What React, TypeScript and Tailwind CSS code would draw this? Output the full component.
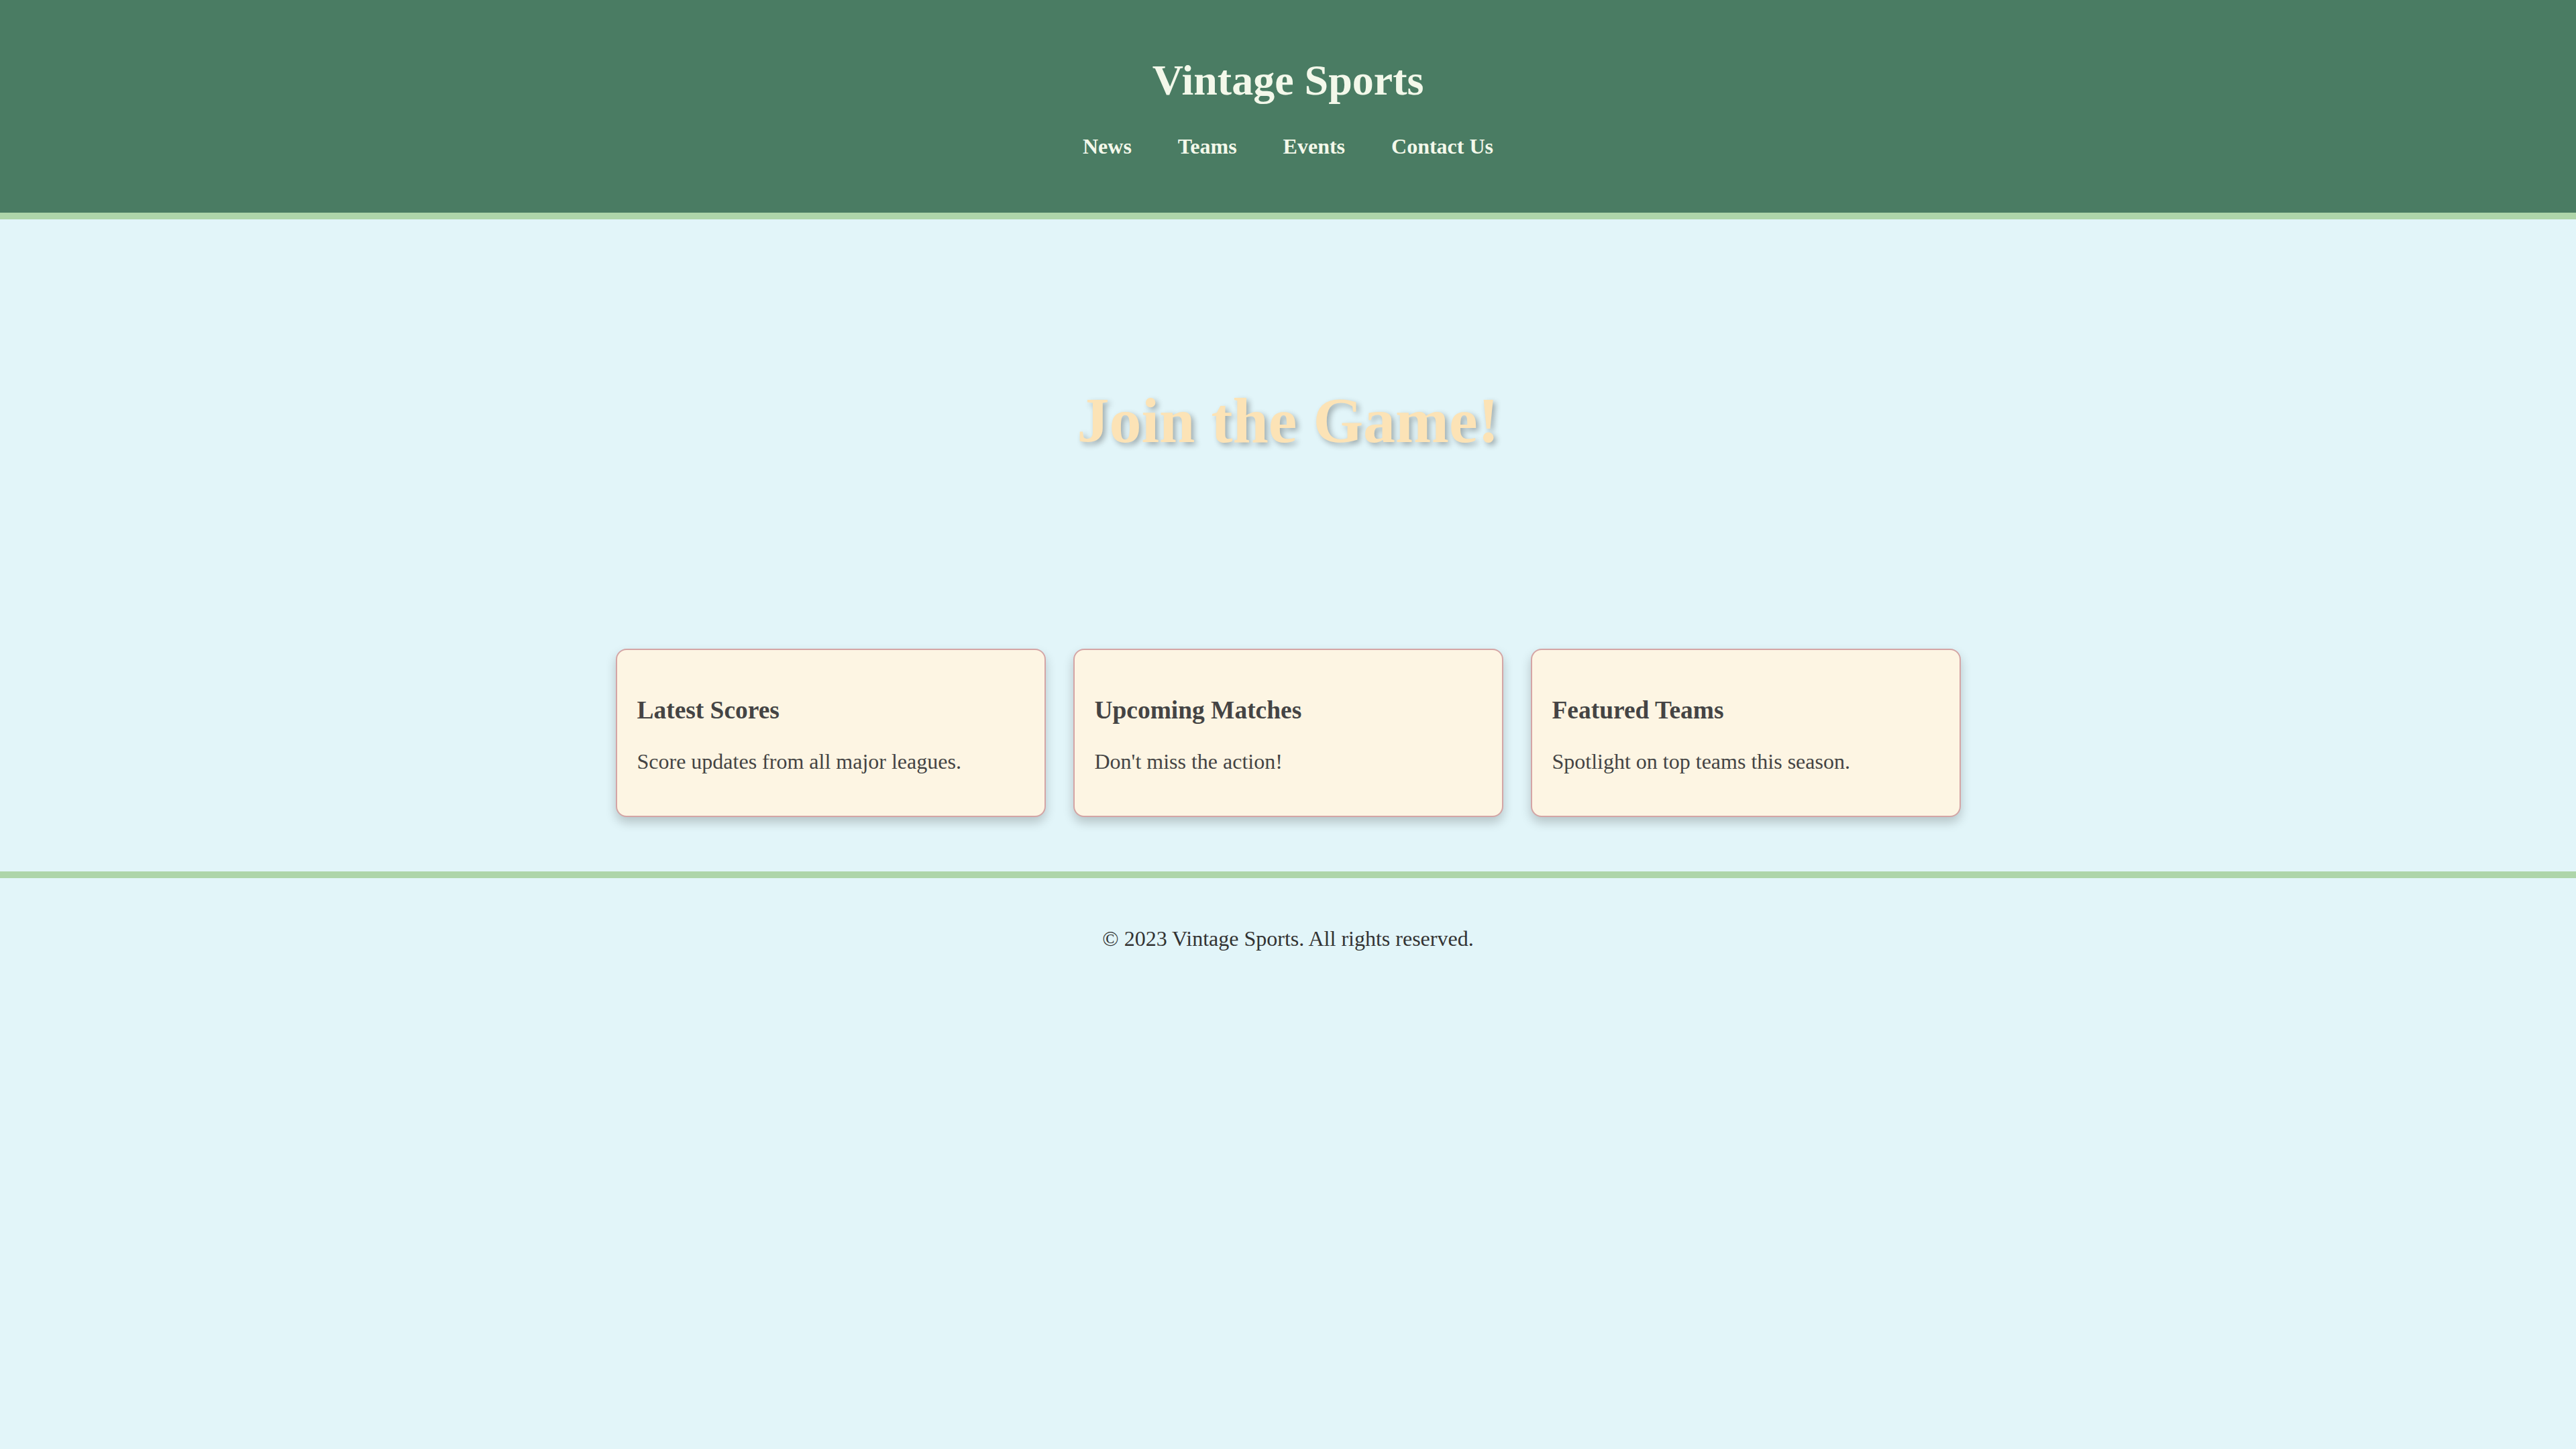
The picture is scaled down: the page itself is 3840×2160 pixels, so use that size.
const navItems = ["News", "Teams", "Events", "Contact Us"];

const cards = [
  { title: "Latest Scores", text: "Score updates from all major leagues." },
  { title: "Upcoming Matches", text: "Don't miss the action!" },
  { title: "Featured Teams", text: "Spotlight on top teams this season." },
];

export default function App() {
  return (
    <div className="min-h-screen bg-[#e2f5f9] font-['Liberation_Serif','Times_New_Roman',serif] text-[#333]">
      <header className="bg-[#4a7c63] border-b-[10px] border-[#aed5aa] pt-[40px] pb-[81px] text-center text-[#f3f8ea]">
        <h1 className="mt-[43px] mb-[43px] text-[64px] font-bold leading-[1.15]">Vintage Sports</h1>
        <nav>
          <ul className="flex justify-center gap-[69px] text-[32px] font-bold leading-[1.15]">
            {navItems.map((item) => (
              <li key={item}>
                <a href="#">{item}</a>
              </li>
            ))}
          </ul>
        </nav>
      </header>

      <section className="flex h-[600px] items-center justify-center">
        <h2 className="text-[96px] font-bold leading-[1.15] text-[#fce3b6] [text-shadow:4px_4px_8px_rgba(0,0,0,0.3)]">
          Join the Game!
        </h2>
      </section>

      <section className="flex justify-center gap-[41px] pt-[40px] pb-[81px]">
        {cards.map((card) => (
          <div
            key={card.title}
            className="w-[641px] rounded-[16px] border-2 border-[#d4a5a5] bg-[#fdf5e3] p-[30px] text-[#444] shadow-[0_8px_16px_rgba(0,0,0,0.2)]"
          >
            <h3 className="my-[37.44px] text-[37.44px] font-bold leading-[1.15]">{card.title}</h3>
            <p className="mb-[32px] text-[32px] leading-[1.15]">{card.text}</p>
          </div>
        ))}
      </section>

      <footer className="border-t-[10px] border-[#aed5aa] py-[40px] text-center">
        <p className="my-[32px] text-[32px] leading-[1.15] text-[#333]">© 2023 Vintage Sports. All rights reserved.</p>
      </footer>
    </div>
  );
}
